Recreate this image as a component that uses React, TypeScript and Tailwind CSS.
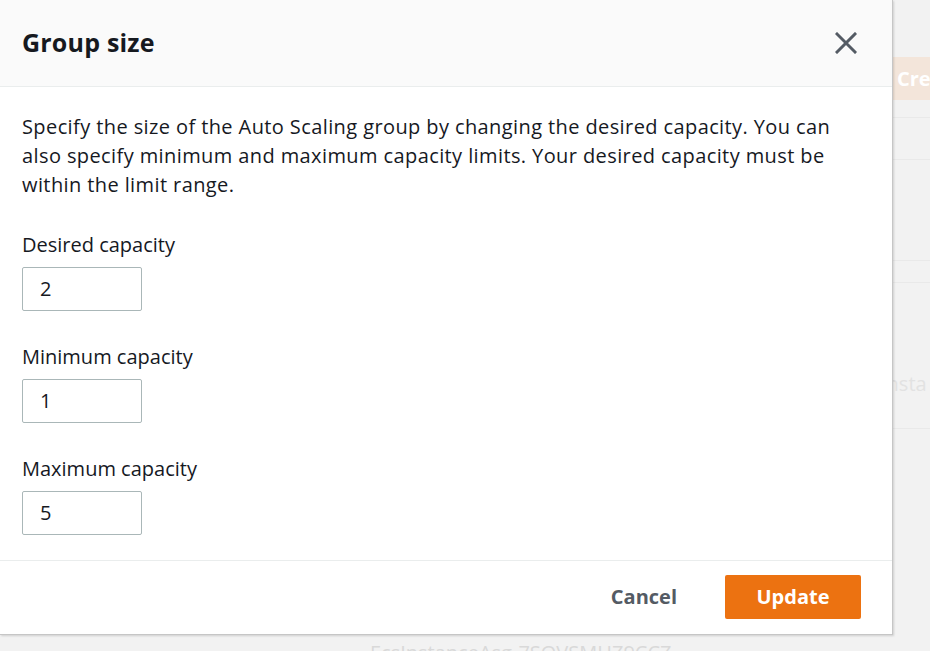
import React from "react";

function CloseIcon() {
  return (
    <svg width="22" height="22" viewBox="0 0 22 22" fill="none">
      <path d="M2 2L20 20M20 2L2 20" stroke="#545b64" strokeWidth="3" strokeLinecap="square" />
    </svg>
  );
}

function Field({ label, value }: { label: string; value: string }) {
  return (
    <div className="flex flex-col">
      <label className="text-[20px] leading-[29px] text-[#16191f]">{label}</label>
      <div className="mt-[8px] w-[120px] h-[44px] border border-[#aab7b8] rounded-[2px] bg-white flex items-center pl-[17px] text-[20px] text-[#16191f]">
        {value}
      </div>
    </div>
  );
}

export default function App() {
  return (
    <div
      className="relative w-[930px] h-[651px] overflow-hidden bg-[#f2f2f2]"
      style={{ fontFamily: '"Open Sans", "Noto Sans", Arial, sans-serif' }}
    >
      {/* dimmed background page */}
      <div className="grid grid-cols-[893px_1fr] h-full">
        <div className="flex flex-col justify-end">
          <div className="pl-[370px] h-[12px] overflow-hidden">
            <div className="text-[20px] leading-[29px] text-[#d9d9d9] -mt-[1px] whitespace-nowrap">EcsInstanceAsg-7SOVSMHZ9CCZ</div>
          </div>
        </div>
        <div className="flex flex-col overflow-hidden">
          <div className="h-[57px]" />
          <div className="h-[43px] bg-[#f3e5da] flex items-center pl-[4px] text-[20px] font-bold text-white whitespace-nowrap overflow-hidden">
            Create
          </div>
          <div className="h-[17px]" />
          <div className="h-[43px] border-t border-b border-[#e9e9e9]" />
          <div className="h-[100px]" />
          <div className="h-[23px] border-t border-b border-[#e9e9e9]" />
          <div className="h-[86px]" />
          <div className="h-[29px] text-[20px] leading-[29px] text-[#e2e2e2] whitespace-nowrap -ml-[12px]">Insta</div>
          <div className="h-[30px]" />
          <div className="border-t border-[#e9e9e9]" />
        </div>
      </div>

      {/* modal */}
      <div className="absolute left-0 top-0 w-[893px] h-[635px] bg-white border-r border-b border-[#c6c6c6] shadow-[1px_1px_2px_rgba(0,0,0,0.15)] flex flex-col">
        <div className="h-[87px] shrink-0 bg-[#fafafa] border-b border-[#eaeded] flex items-center justify-between pl-[22px] pr-[35px]">
          <h2 className="text-[25px] font-bold text-[#16191f] leading-none -mt-[2px] tracking-[0.2px]">Group size</h2>
          <button className="-mt-[1px]"><CloseIcon /></button>
        </div>
        <div className="flex-1 px-[22px] pt-[25px] flex flex-col">
          <p className="text-[20px] leading-[29px] text-[#16191f] pr-[25px] tracking-[0.4px]">
            Specify the size of the Auto Scaling group by changing the desired capacity. You can also specify minimum and maximum capacity limits. Your desired capacity must be within the limit range.
          </p>
          <div className="mt-[31px] flex flex-col gap-[31px]">
            <Field label="Desired capacity" value="2" />
            <Field label="Minimum capacity" value="1" />
            <Field label="Maximum capacity" value="5" />
          </div>
        </div>
        <div className="h-[74px] shrink-0 border-t border-[#eaeded] flex items-center justify-end pr-[31px] pb-[1px]">
          <button className="px-[20px] h-[44px] text-[20px] font-bold text-[#545b64]">Cancel</button>
          <button className="ml-[28px] h-[44px] w-[136px] rounded-[2px] bg-[#ec7211] text-[20px] font-bold text-white">Update</button>
        </div>
      </div>
    </div>
  );
}
